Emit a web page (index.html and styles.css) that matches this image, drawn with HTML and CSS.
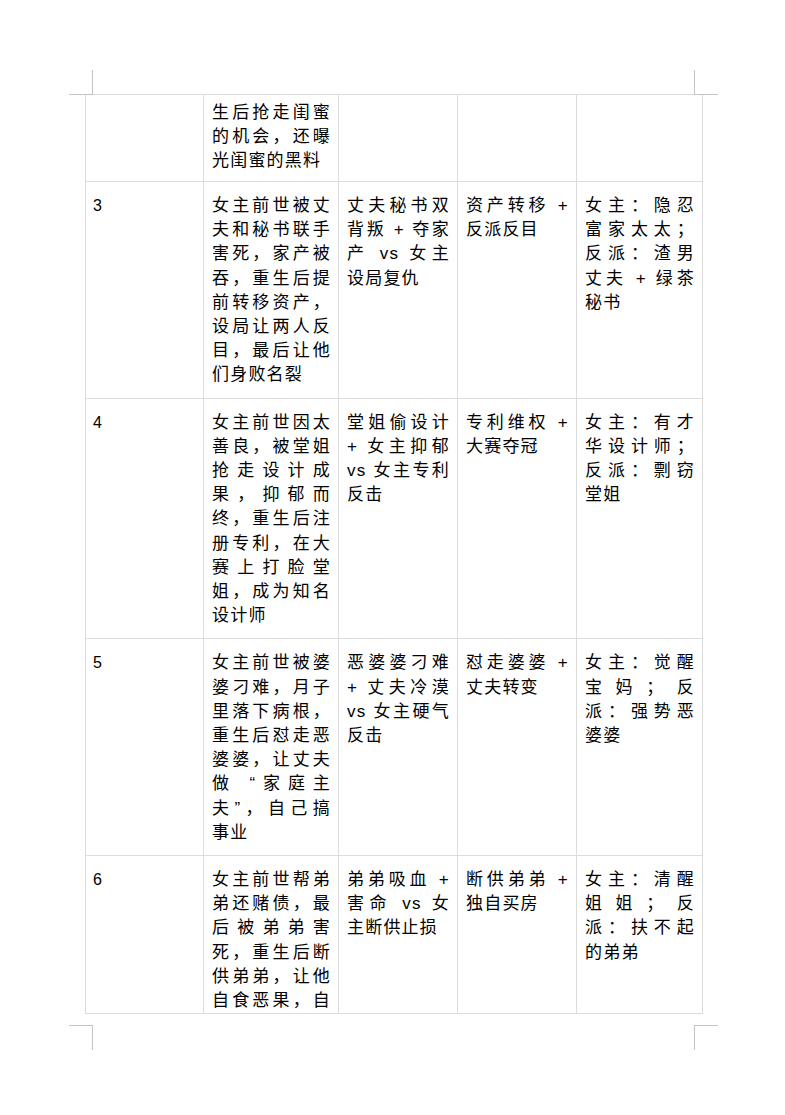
FILE: index.html
```html
<!DOCTYPE html>
<html lang="zh-CN">
<head>
<meta charset="utf-8">
<title>重生复仇剧情表</title>
<link rel="stylesheet" href="styles.css">
</head>
<body>
<div class="page">
  <div class="marks marks-top">
    <div class="mark tl"></div>
    <div class="mark tr"></div>
  </div>
  <table class="plot">
    <colgroup>
      <col class="c1"><col class="c2"><col class="c3"><col class="c4"><col class="c5">
    </colgroup>
    <tbody>
      <tr class="r-first">
        <td><div class="cell"></div></td>
        <td><div class="cell">
          <div class="j">生后抢走闺蜜</div>
          <div class="j">的机会，还曝</div>
          <div class="l">光闺蜜的黑料</div>
        </div></td>
        <td><div class="cell"></div></td>
        <td><div class="cell"></div></td>
        <td><div class="cell"></div></td>
      </tr>
      <tr>
        <td><div class="cell num">3</div></td>
        <td><div class="cell">
          <div class="j">女主前世被丈</div>
          <div class="j">夫和秘书联手</div>
          <div class="j">害死，家产被</div>
          <div class="j">吞，重生后提</div>
          <div class="j">前转移资产，</div>
          <div class="j">设局让两人反</div>
          <div class="j">目，最后让他</div>
          <div class="l">们身败名裂</div>
        </div></td>
        <td><div class="cell">
          <div class="j">丈夫秘书双</div>
          <div class="j">背叛 + 夺家</div>
          <div class="j">产 vs 女主</div>
          <div class="l">设局复仇</div>
        </div></td>
        <td><div class="cell">
          <div class="j">资产转移 +</div>
          <div class="l">反派反目</div>
        </div></td>
        <td><div class="cell">
          <div class="j">女主：隐忍</div>
          <div class="j">富家太太；</div>
          <div class="j">反派：渣男</div>
          <div class="j">丈夫 + 绿茶</div>
          <div class="l">秘书</div>
        </div></td>
      </tr>
      <tr>
        <td><div class="cell num">4</div></td>
        <td><div class="cell">
          <div class="j">女主前世因太</div>
          <div class="j">善良，被堂姐</div>
          <div class="j">抢走设计成</div>
          <div class="j">果，抑郁而</div>
          <div class="j">终，重生后注</div>
          <div class="j">册专利，在大</div>
          <div class="j">赛上打脸堂</div>
          <div class="j">姐，成为知名</div>
          <div class="l">设计师</div>
        </div></td>
        <td><div class="cell">
          <div class="j">堂姐偷设计</div>
          <div class="j">+ 女主抑郁</div>
          <div class="j">vs 女主专利</div>
          <div class="l">反击</div>
        </div></td>
        <td><div class="cell">
          <div class="j">专利维权 +</div>
          <div class="l">大赛夺冠</div>
        </div></td>
        <td><div class="cell">
          <div class="j">女主：有才</div>
          <div class="j">华设计师；</div>
          <div class="j">反派：剽窃</div>
          <div class="l">堂姐</div>
        </div></td>
      </tr>
      <tr>
        <td><div class="cell num">5</div></td>
        <td><div class="cell">
          <div class="j">女主前世被婆</div>
          <div class="j">婆刁难，月子</div>
          <div class="j">里落下病根，</div>
          <div class="j">重生后怼走恶</div>
          <div class="j">婆婆，让丈夫</div>
          <div class="j">做 “家庭主</div>
          <div class="j">夫”，自己搞</div>
          <div class="l">事业</div>
        </div></td>
        <td><div class="cell">
          <div class="j">恶婆婆刁难</div>
          <div class="j">+ 丈夫冷漠</div>
          <div class="j">vs 女主硬气</div>
          <div class="l">反击</div>
        </div></td>
        <td><div class="cell">
          <div class="j">怼走婆婆 +</div>
          <div class="l">丈夫转变</div>
        </div></td>
        <td><div class="cell">
          <div class="j">女主：觉醒</div>
          <div class="j">宝妈；反</div>
          <div class="j">派：强势恶</div>
          <div class="l">婆婆</div>
        </div></td>
      </tr>
      <tr class="r-last">
        <td><div class="cell num">6</div></td>
        <td><div class="cell">
          <div class="j">女主前世帮弟</div>
          <div class="j">弟还赌债，最</div>
          <div class="j">后被弟弟害</div>
          <div class="j">死，重生后断</div>
          <div class="j">供弟弟，让他</div>
          <div class="j">自食恶果，自</div>
        </div></td>
        <td><div class="cell">
          <div class="j">弟弟吸血 +</div>
          <div class="j">害命 vs 女</div>
          <div class="l">主断供止损</div>
        </div></td>
        <td><div class="cell">
          <div class="j">断供弟弟 +</div>
          <div class="l">独自买房</div>
        </div></td>
        <td><div class="cell">
          <div class="j">女主：清醒</div>
          <div class="j">姐姐；反</div>
          <div class="j">派：扶不起</div>
          <div class="l">的弟弟</div>
        </div></td>
      </tr>
    </tbody>
  </table>
  <div class="marks marks-bottom">
    <div class="mark bl"></div>
    <div class="mark br"></div>
  </div>
</div>
</body>
</html>
```
FILE: styles.css
```css
html, body {
  margin: 0;
  padding: 0;
  background: #ffffff;
}

.page {
  width: 785px;
  height: 1115px;
  padding-top: 70px;
  box-sizing: border-box;
  font-family: "Liberation Sans", "Noto Sans CJK SC", sans-serif;
  color: #000000;
}

.marks {
  display: flex;
  justify-content: space-between;
  margin: 0 67px 0 69px;
}

.mark {
  width: 23px;
  height: 24px;
  border-color: #c4c4c4;
  border-style: solid;
  border-width: 0;
}

.mark.tl { border-right-width: 1px; border-bottom-width: 1px; }
.mark.tr { border-left-width: 1px; border-bottom-width: 1px; }
.mark.bl { border-right-width: 1px; border-top-width: 1px; }
.mark.br { border-left-width: 1px; border-top-width: 1px; }

.marks-bottom {
  margin-top: 11px;
}

.plot {
  margin: -1px 0 0 85px;
  border-collapse: collapse;
  table-layout: fixed;
  width: 617px;
}

.plot col.c1 { width: 118px; }
.plot col.c2 { width: 135px; }
.plot col.c3 { width: 119px; }
.plot col.c4 { width: 119px; }
.plot col.c5 { width: 126px; }

.plot td {
  border: 1px solid #dcdcdc;
  padding: 0;
  vertical-align: top;
}

.cell {
  padding: 12px 7px 10px 8px;
  font-size: 17px;
  line-height: 24.2px;
  letter-spacing: 1.2px;
}

.r-first .cell {
  height: 86px;
  box-sizing: border-box;
  padding-top: 6px;
  padding-bottom: 0;
}

.r-last .cell {
  height: 157px;
  box-sizing: border-box;
  padding-bottom: 0;
  overflow: hidden;
}

.cell.num {
  font-size: 16px;
  letter-spacing: 0;
  padding-left: 7px;
}

.j {
  text-align: justify;
  text-align-last: justify;
}

.l {
  text-align: left;
}
```
